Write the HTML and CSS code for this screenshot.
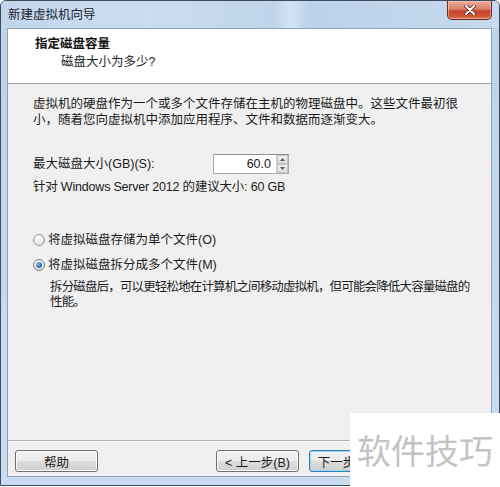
FILE: index.html
```html
<!DOCTYPE html>
<html lang="zh-CN">
<head>
<meta charset="utf-8">
<title>新建虚拟机向导</title>
<link rel="stylesheet" href="styles.css">
</head>
<body>
<div class="window">
  <div class="titlebar">
    <span class="title">新建虚拟机向导</span>
    <div class="close">
      <svg width="12" height="10" viewBox="0 0 12 10">
        <path d="M2 1 L10 9 M10 1 L2 9" stroke="#5a2418" stroke-width="3.6" stroke-linecap="round"/>
        <path d="M2 1 L10 9 M10 1 L2 9" stroke="#ffffff" stroke-width="2" stroke-linecap="round"/>
      </svg>
    </div>
  </div>
  <div class="client">
    <div class="header">
      <div class="h-title">指定磁盘容量</div>
      <div class="h-sub">磁盘大小为多少?</div>
    </div>
    <div class="content">
      <p class="intro">虚拟机的硬盘作为一个或多个文件存储在主机的物理磁盘中。这些文件最初很<br>小，随着您向虚拟机中添加应用程序、文件和数据而逐渐变大。</p>
      <div class="size-row">
        <span class="size-label">最大磁盘大小(GB)(S):</span>
        <div class="spin">
          <span class="spin-val">60.0</span>
          <div class="spin-arrows">
            <span class="arr"><svg width="5" height="3" viewBox="0 0 5 3"><path d="M0 3 L2.5 0 L5 3 Z" fill="#5a5a5a"/></svg></span>
            <span class="arr"><svg width="5" height="3" viewBox="0 0 5 3"><path d="M0 0 L2.5 3 L5 0 Z" fill="#5a5a5a"/></svg></span>
          </div>
        </div>
      </div>
      <p class="hint">针对 Windows Server 2012 的建议大小: 60 GB</p>
      <div class="radio first"><span class="dot"></span><span>将虚拟磁盘存储为单个文件(O)</span></div>
      <div class="radio second"><span class="dot on"></span><span>将虚拟磁盘拆分成多个文件(M)</span></div>
      <p class="desc">拆分磁盘后，可以更轻松地在计算机之间移动虚拟机，但可能会降低大容量磁盘的<br>性能。</p>
    </div>
    <div class="footer">
      <button class="btn">帮助</button>
      <div class="btn-group">
        <button class="btn">&lt; 上一步(B)</button>
        <button class="btn default">下一步(N) &gt;</button>
      </div>
    </div>
  </div>
</div>
<div class="watermark">软件技巧</div>
</body>
</html>
```

FILE: styles.css
```css
* { box-sizing: border-box; }
html, body { margin: 0; padding: 0; background: #ffffff; }
body {
  font-family: "Liberation Sans", "Noto Sans CJK SC", sans-serif;
  font-size: 12.5px;
  color: #1b1b1b;
  width: 500px;
  height: 487px;
  position: relative;
  overflow: hidden;
}
.window {
  width: 500px;
  height: 486px;
  border: 1px solid #3e4c5c;
  border-radius: 6px 6px 0 0;
  background: linear-gradient(180deg, #c6daef 0%, #bcd3eb 6%, #c3d8ee 50%, #c9ddf1 100%);
  display: flex;
  flex-direction: column;
}
.titlebar {
  height: 27px;
  display: flex;
  align-items: flex-start;
  background: linear-gradient(90deg, #c2d6ec 0%, #cadcf0 30%, #bfd4ea 55%, #d4e4f5 58%, #bcd2ea 62%, #c6d9ee 100%);
  border-radius: 5px 5px 0 0;
}
.title {
  margin: 6px 0 0 7px;
  line-height: 16px;
  color: #1e2530;
}
.close {
  margin-left: auto;
  margin-right: 7px;
  width: 45px;
  height: 19px;
  border: 1px solid #6b2e26;
  border-top: none;
  border-radius: 0 0 5px 5px;
  background: linear-gradient(180deg, #e9ad9c 0%, #dc806a 45%, #c5452a 55%, #cf5536 85%, #e27a5a 100%);
  display: flex;
  align-items: center;
  justify-content: center;
  box-shadow: inset 0 0 0 1px rgba(255, 220, 210, 0.45);
}
.client {
  margin: 0 7px 0 6px;
  height: 449px;
  border: 1px solid #8ea3ba;
  background: #f0f0f0;
  display: flex;
  flex-direction: column;
}
.header {
  height: 55px;
  background: #ffffff;
  border-bottom: 1px solid #a0a0a0;
  padding: 7px 0 0 27px;
}
.h-title {
  font-weight: bold;
  line-height: 16px;
  color: #111111;
}
.h-sub {
  line-height: 16px;
  margin-top: 2px;
  padding-left: 26px;
}
.content {
  flex: 1;
  padding: 12px 0 0 25px;
}
.intro {
  margin: 0;
  line-height: 16px;
  white-space: nowrap;
}
.size-row {
  margin-top: 26px;
  display: flex;
  align-items: center;
  height: 20px;
}
.size-label {
  width: 180px;
  line-height: 16px;
}
.spin {
  display: flex;
  height: 20px;
  border: 1px solid #abadb3;
  border-top-color: #8e9297;
  background: #ffffff;
}
.spin-val {
  width: 62px;
  text-align: right;
  padding-right: 5px;
  line-height: 18px;
}
.spin-arrows {
  width: 12px;
  display: flex;
  flex-direction: column;
  border-left: 1px solid #d4d4d4;
}
.arr {
  flex: 1;
  display: flex;
  align-items: center;
  justify-content: center;
  background: linear-gradient(180deg, #f4f4f4, #dcdcdc);
  border: 1px solid #c2c2c2;
}
.hint {
  margin: 5px 0 0 0;
  line-height: 16px;
  letter-spacing: -0.2px;
}
.radio {
  display: flex;
  align-items: center;
  line-height: 16px;
}
.radio.first { margin-top: 37px; }
.radio.second { margin-top: 9px; }
.dot {
  width: 12px;
  height: 12px;
  border-radius: 50%;
  border: 1px solid #9a9a9a;
  background: radial-gradient(circle at 40% 35%, #ffffff 0%, #e6e6e6 60%, #d0d0d0 100%);
  margin-right: 3px;
  position: relative;
}
.dot.on {
  border-color: #7b7b7b;
}
.dot.on::after {
  content: "";
  position: absolute;
  left: 2px;
  top: 2px;
  width: 6px;
  height: 6px;
  border-radius: 50%;
  background: radial-gradient(circle at 35% 35%, #8fc0ee 0%, #2c6cb0 60%, #1b4d8a 100%);
}
.desc {
  margin: 7px 0 0 17px;
  line-height: 15px;
  white-space: nowrap;
  letter-spacing: -0.85px;
}
.footer {
  height: 36px;
  border-top: 1px solid #b0b0b0;
  box-shadow: inset 0 1px 0 #ffffff;
  padding: 9px 99px 0 7px;
  display: flex;
  align-items: flex-start;
}
.btn-group {
  margin-left: auto;
  display: flex;
  gap: 10px;
}
.btn {
  font: inherit;
  color: #1b1b1b;
  width: 83px;
  height: 22px;
  padding: 0;
  border: 1px solid #707070;
  border-radius: 3px;
  background: linear-gradient(180deg, #f3f3f3 0%, #ebebeb 48%, #dddddd 52%, #cfcfcf 100%);
  box-shadow: inset 0 0 0 1px #fcfcfc;
  white-space: nowrap;
}
.btn.default {
  border-color: #3c7fb1;
  box-shadow: inset 0 0 0 1px #8fd4f4;
}
.watermark {
  position: absolute;
  left: 350px;
  top: 413px;
  width: 150px;
  height: 74px;
  background: #ffffff;
  color: #c3c3c3;
  font-family: "Noto Sans CJK SC", sans-serif;
  font-size: 34px;
  line-height: 74px;
  padding-left: 7px;
}
```
